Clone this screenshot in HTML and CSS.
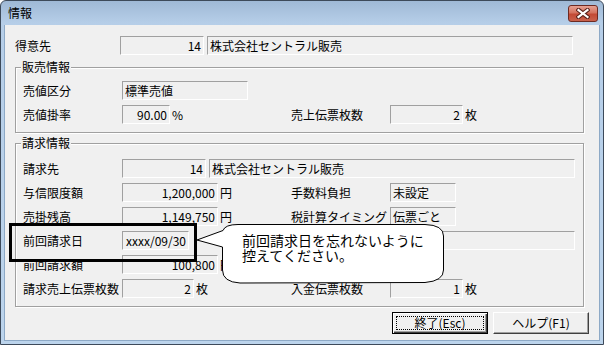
FILE: index.html
```html
<!DOCTYPE html>
<html lang="ja">
<head>
<meta charset="utf-8">
<title>情報</title>
<link rel="stylesheet" href="styles.css">
</head>
<body>
<div class="window">
  <div class="titlebar">
    <span class="title">情報</span>
    <span class="close">
      <svg width="14" height="11" viewBox="0 0 14 11"><path d="M2.5 2 L11.5 9 M11.5 2 L2.5 9" stroke="#5a231c" stroke-width="4.2" stroke-linecap="square"/><path d="M2.5 2 L11.5 9 M11.5 2 L2.5 9" stroke="#fff" stroke-width="2.2" stroke-linecap="square"/></svg>
    </span>
  </div>
  <div class="client">
    <div class="row">
      <span class="lbl wide">得意先</span>
      <span class="fld num w84">14</span>
      <span class="fld w366 ml3">株式会社セントラル販売</span>
    </div>

    <fieldset class="group g1">
      <legend>販売情報</legend>
      <div class="row">
        <span class="lbl">売値区分</span>
        <span class="fld w126">標準売値</span>
      </div>
      <div class="row">
        <span class="lbl">売値掛率</span>
        <span class="fld num w48">90.00</span>
        <span class="unit u121">%</span>
        <span class="lbl2">売上伝票枚数</span>
        <span class="fld num w73">2</span>
        <span class="unit">枚</span>
      </div>
    </fieldset>

    <fieldset class="group g2">
      <legend>請求情報</legend>
      <div class="row">
        <span class="lbl">請求先</span>
        <span class="fld num w84">14</span>
        <span class="fld w366 ml3">株式会社セントラル販売</span>
      </div>
      <div class="row">
        <span class="lbl">与信限度額</span>
        <span class="fld num w96">1,200,000</span>
        <span class="unit u73">円</span>
        <span class="lbl2">手数料負担</span>
        <span class="fld w66">未設定</span>
      </div>
      <div class="row">
        <span class="lbl">売掛残高</span>
        <span class="fld num w96">1,149,750</span>
        <span class="unit u73">円</span>
        <span class="lbl2">税計算タイミング</span>
        <span class="fld w66">伝票ごと</span>
      </div>
      <div class="row">
        <span class="lbl">前回請求日</span>
        <span class="fld num w67">xxxx/09/30</span>
        <span class="fld w185 ml201"></span>
      </div>
      <div class="row">
        <span class="lbl">前回請求額</span>
        <span class="fld num w96">100,800</span>
        <span class="unit u73">円</span>
      </div>
      <div class="row">
        <span class="lbl">請求売上伝票枚数</span>
        <span class="fld num w72">2</span>
        <span class="unit u97">枚</span>
        <span class="lbl2">入金伝票枚数</span>
        <span class="fld num w73">1</span>
        <span class="unit">枚</span>
      </div>
    </fieldset>

    <div class="buttons">
      <button class="btn default"><span class="focus">終了(Esc)</span></button>
      <button class="btn">ヘルプ(F1)</button>
    </div>
  </div>

  <svg class="callout-art" width="604" height="345" viewBox="0 0 604 345">
    <rect x="10.5" y="224.5" width="185" height="36" fill="none" stroke="#000" stroke-width="3"/>
    <path d="M223 230.5 Q225 224.5 238 224.5 L425 224.5 Q443.5 225 443.5 236 L443.5 270 Q443.5 281 425 282.5 L240 283 Q222.5 282 222.5 270 L222.5 247 L197 240 Z" fill="#fff" stroke="#000" stroke-width="1"/>
  </svg>
  <div class="callout-text">前回請求日を忘れないように<br>控えてください。</div>
</div>
</body>
</html>
```

FILE: styles.css
```css
* { box-sizing: border-box; }

body {
  margin: 0;
  background: #fff;
  color: #000;
  font-family: "Noto Sans CJK JP", "Noto Sans", sans-serif;
  font-size: 12px;
}

.window {
  position: relative;
  width: 604px;
  height: 345px;
  border: 1px solid #3d4a5a;
  border-radius: 6px 6px 0 0;
  background: linear-gradient(#9fb9d6, #b6cee8 22px, #bcd4ec);
  display: flex;
  flex-direction: column;
  overflow: hidden;
}

.titlebar {
  height: 24px;
  flex: none;
  display: flex;
  align-items: center;
  justify-content: space-between;
  padding: 0 5px 0 7px;
}

.title {
  font-size: 12px;
  line-height: 14px;
}

.close {
  width: 30px;
  height: 17px;
  border: 1px solid #6d2a22;
  border-radius: 3px;
  background: linear-gradient(#e6a192, #d4735f 45%, #c34a35 55%, #c9614c);
  display: flex;
  align-items: center;
  justify-content: center;
}

.client {
  flex: 1;
  margin: 0 3px 3px;
  background: #f0f0f0;
  border: 1px solid #8da9c6;
  border-top: none;
  padding: 11px 0 0 10px;
}

.row {
  display: flex;
  align-items: center;
  height: 19px;
  white-space: nowrap;
}
.row + .row { margin-top: 5px; }

.lbl { flex: none; width: 99px; line-height: 14px; }
.lbl.wide { width: 105px; }
.lbl2 { flex: none; width: 99px; line-height: 14px; }

.fld {
  flex: none;
  height: 19px;
  border: 1px solid;
  border-color: #a0a0a0 #fff #fff #a0a0a0;
  padding: 0 2px;
  display: flex;
  align-items: center;
  overflow: hidden;
  line-height: 14px;
}
.fld.num { justify-content: flex-end; }

.ml3 { margin-left: 3px; }
.ml201 { margin-left: 201px; }
.w48 { width: 48px; }
.w66 { width: 66px; }
.w67 { width: 67px; }
.w72 { width: 72px; }
.w73 { width: 73px; }
.w84 { width: 84px; }
.w96 { width: 96px; }
.w126 { width: 126px; }
.w185 { width: 185px; }
.w366 { width: 366px; }

.unit { flex: none; padding-left: 2px; line-height: 14px; }
.u73 { width: 73px; }
.u97 { width: 97px; }
.u121 { width: 121px; }

.group {
  width: 569px;
  margin: 5px 0 0;
  padding: 7px 0 8px 7px;
  border: 1px solid #a0a0a0;
  box-shadow: 1px 1px 0 #fff, inset 1px 1px 0 #fff;
  min-inline-size: auto;
}
.group legend {
  padding: 0 1px;
  margin-left: -2px;
  line-height: 14px;
  background: #f0f0f0;
}
.g2 {
  margin-top: 3px;
  padding-top: 9px;
}

.buttons {
  display: flex;
  justify-content: flex-end;
  gap: 5px;
  margin-top: 5px;
  padding-right: 10px;
}

.btn {
  width: 96px;
  height: 22px;
  padding: 0;
  font: inherit;
  font-size: 12px;
  color: #000;
  background: #f0f0f0;
  border: 1px solid;
  border-color: #fff #404040 #404040 #fff;
  box-shadow: inset -1px -1px 0 #a0a0a0;
  display: flex;
  align-items: center;
  justify-content: center;
  line-height: 14px;
}
.btn.default {
  border-color: #000;
  box-shadow: inset 1px 1px 0 #fff, inset -1px -1px 0 #404040, inset -2px -2px 0 #a0a0a0;
  padding: 3px;
}
.focus {
  flex: 1;
  align-self: stretch;
  border: 1px dotted #000;
  display: flex;
  align-items: center;
  justify-content: center;
}

.callout-art {
  position: absolute;
  left: -1px;
  top: -1px;
  pointer-events: none;
}
.callout-text {
  position: absolute;
  left: 241px;
  top: 232px;
  font-size: 14px;
  line-height: 15px;
  white-space: nowrap;
}
```
